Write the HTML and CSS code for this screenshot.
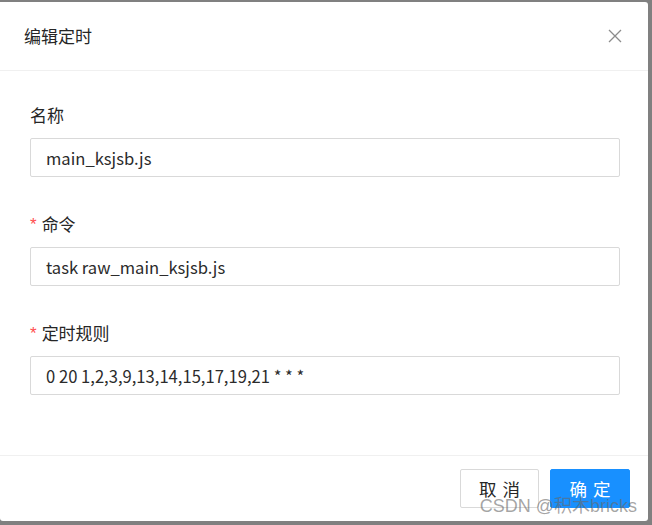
FILE: index.html
```html
<!DOCTYPE html>
<html lang="zh">
<head>
<meta charset="utf-8">
<title>编辑定时</title>
<link rel="stylesheet" href="styles.css">
</head>
<body>
<div class="dialog">
  <div class="dialog-header">
    <span class="dialog-title">编辑定时</span>
    <span class="close" aria-label="关闭">
      <svg width="14" height="14" viewBox="0 0 14 14"><path d="M1 1 L13 13 M13 1 L1 13" stroke="#8c8c8c" stroke-width="1.3" fill="none"/></svg>
    </span>
  </div>
  <div class="dialog-body">
    <div class="form-item">
      <div class="label">名称</div>
      <div class="input">main_ksjsb.js</div>
    </div>
    <div class="form-item">
      <div class="label"><span class="req">*</span>命令</div>
      <div class="input">task raw_main_ksjsb.js</div>
    </div>
    <div class="form-item">
      <div class="label"><span class="req">*</span>定时规则</div>
      <div class="input">0 20 1,2,3,9,13,14,15,17,19,21 * * *</div>
    </div>
  </div>
  <div class="dialog-footer">
    <button class="btn">取消</button>
    <button class="btn btn-primary">确定</button>
  </div>
  <div class="watermark">CSDN @积木bricks</div>
</div>
</body>
</html>
```

FILE: styles.css
```css
html, body {
  margin: 0;
  padding: 0;
}
body {
  background: #808080;
  width: 652px;
  height: 525px;
  overflow: hidden;
  font-family: "Noto Sans CJK SC", "Noto Sans", sans-serif;
  color: #262626;
}
.dialog {
  position: relative;
  margin-top: 2px;
  width: 648px;
  height: 519px;
  background: #fff;
  border-radius: 0 3px 3px 3px;
  display: flex;
  flex-direction: column;
}
.dialog-header {
  height: 68px;
  border-bottom: 1px solid #f0f0f0;
  display: flex;
  align-items: center;
  justify-content: space-between;
  padding: 0 26px 0 24px;
}
.dialog-title {
  font-size: 17px;
  line-height: 24px;
  color: #262626;
}
.close {
  display: flex;
  width: 14px;
  height: 14px;
}
.dialog-body {
  flex: 1;
  padding: 32px 28px 0 30px;
}
.form-item {
  margin-bottom: 35px;
}
.label {
  font-size: 17px;
  line-height: 24px;
  height: 24px;
  margin-bottom: 11px;
  display: flex;
  align-items: center;
}
.req {
  color: #ff4d4f;
  font-family: "Liberation Sans", sans-serif;
  font-size: 17px;
  margin-right: 5px;
  position: relative;
  top: 1px;
}
.input {
  height: 39px;
  box-sizing: border-box;
  border: 1px solid #d9d9d9;
  border-radius: 2px;
  padding: 0 15px;
  display: flex;
  align-items: center;
  font-size: 16.6px;
  color: #2b2b2b;
}
.dialog-footer {
  height: 65px;
  border-top: 1px solid #f0f0f0;
  display: flex;
  align-items: center;
  justify-content: flex-end;
  gap: 11px;
  padding: 0 18px;
}
.btn {
  width: 79px;
  height: 39px;
  box-sizing: border-box;
  border: 1px solid #d9d9d9;
  border-radius: 2px;
  background: #fff;
  color: #262626;
  font-family: "Noto Sans CJK SC", sans-serif;
  font-size: 17.5px;
  letter-spacing: 0.34em;
  text-indent: 0.34em;
  padding: 0;
}
.btn-primary {
  width: 80px;
  background: #1890ff;
  border-color: #1890ff;
  color: #fff;
}
.watermark {
  position: absolute;
  right: 11px;
  bottom: 5px;
  font-family: "Liberation Sans", "Noto Sans CJK SC", sans-serif;
  font-size: 18px;
  line-height: 20px;
  color: rgba(105, 105, 105, 0.6);
  pointer-events: none;
}
```
